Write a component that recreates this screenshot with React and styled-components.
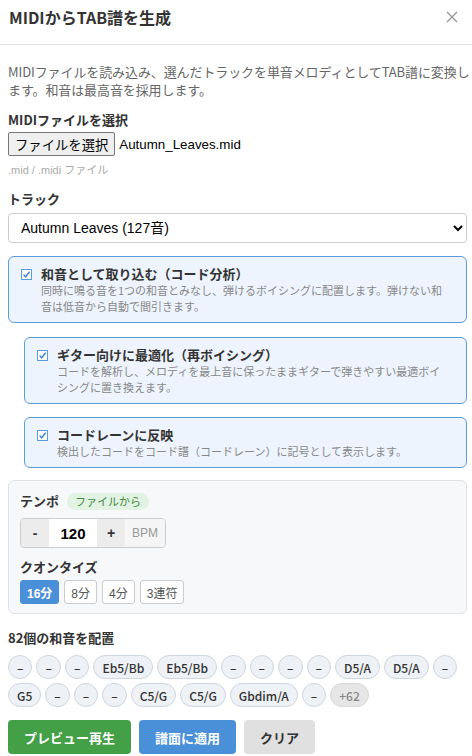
import React from "react";
import styled, { createGlobalStyle } from "styled-components";

const GlobalStyle = createGlobalStyle`
  html, body {
    margin: 0;
    padding: 0;
    background: #fff;
  }
  body {
    font-family: "Noto Sans CJK JP", "Noto Sans", sans-serif;
    color: #333;
  }
`;

const NATIVE_FONT = `"Liberation Sans", "Noto Sans CJK JP", sans-serif`;

const Modal = styled.div`
  width: 472px;
  background: #fff;
`;

const Header = styled.div`
  display: flex;
  align-items: center;
  justify-content: space-between;
  padding: 4px 12px 14px 9px;
  border-bottom: 1px solid #e0e0e0;
`;

const Title = styled.h2`
  margin: 0;
  font-size: 16px;
  line-height: 26px;
  font-weight: 700;
  color: #333;
`;

const CloseButton = styled.button`
  border: none;
  background: none;
  padding: 0;
  width: 16px;
  height: 16px;
  display: flex;
  align-items: center;
  justify-content: center;
  cursor: pointer;
`;

const Body = styled.div`
  padding: 18px 5px 0 8px;
`;

const Description = styled.p`
  margin: 0 -5px 12px 0;
  font-size: 13px;
  line-height: 18px;
  letter-spacing: -0.1px;
  color: #666;
`;

const Label = styled.div`
  font-size: 13px;
  font-weight: 700;
  line-height: 18px;
  color: #333;
  margin-bottom: ${props => (props.mb !== undefined ? props.mb : 4)}px;
`;

const FileRow = styled.div`
  display: flex;
  align-items: center;
  gap: 4px;
  height: 24px;
`;

const FileButton = styled.button`
  font-family: ${NATIVE_FONT};
  font-size: 13.33px;
  height: 24px;
  padding: 0 6px;
  background: #efefef;
  border: 1px solid #767676;
  border-radius: 2px;
  color: #000;
`;

const FileName = styled.span`
  font-family: ${NATIVE_FONT};
  font-size: 13.33px;
  color: #000;
`;

const Hint = styled.div`
  font-family: ${NATIVE_FONT};
  font-size: 11px;
  line-height: 14px;
  color: #aaa;
  margin: 7px 0 13px;
`;

const Select = styled.select`
  display: block;
  width: 100%;
  height: 30px;
  padding: 0 8px;
  font-family: ${NATIVE_FONT};
  font-size: 14px;
  color: #000;
  background: #fff;
  border: 1px solid #ccc;
  border-radius: 4px;
  margin: 0 0 13px;
`;

const OptionCard = styled.label`
  display: flex;
  align-items: flex-start;
  gap: 9px;
  margin: 0 0 ${props => props.mb || 14}px ${props => (props.indent ? 16 : 0)}px;
  padding: 8px 16px 8px 12px;
  background: #edf4fd;
  border: 1px solid #5d9be0;
  border-radius: 6px;
`;

const CheckMark = styled.span`
  flex: none;
  display: flex;
  margin-top: 4px;
`;

const OptionText = styled.div`
  display: flex;
  flex-direction: column;
`;

const OptionTitle = styled.div`
  font-size: 13px;
  font-weight: 700;
  line-height: 17px;
  color: #333;
`;

const OptionDesc = styled.div`
  font-size: 11px;
  line-height: 16px;
  color: #888;
`;

const Panel = styled.div`
  background: #f7f8fa;
  border: 1px solid #dfe2e6;
  border-radius: 6px;
  padding: 11px 11px 9px;
  margin: 0 0 15px;
`;

const LabelRow = styled.div`
  display: flex;
  align-items: center;
  gap: 8px;
  margin-bottom: 8px;
`;

const Badge = styled.span`
  font-size: 11px;
  line-height: 17px;
  padding: 0 8px;
  border-radius: 9px;
  background: #e3f3e3;
  color: #3d8b3d;
`;

const Stepper = styled.div`
  display: flex;
  width: max-content;
  height: 30px;
  box-sizing: border-box;
  border: 1px solid #ccc;
  border-radius: 4px;
  overflow: hidden;
  margin-bottom: 10px;
  font-family: ${NATIVE_FONT};
`;

const StepButton = styled.button`
  width: 28px;
  border: none;
  background: #ececec;
  font-family: ${NATIVE_FONT};
  font-size: 14px;
  font-weight: 700;
  color: #333;
  padding: 0;
`;

const TempoValue = styled.input`
  width: 48px;
  border: none;
  background: #fff;
  text-align: center;
  font-family: ${NATIVE_FONT};
  font-size: 15px;
  font-weight: 700;
  color: #000;
  padding: 0;
  outline: none;
`;

const Unit = styled.span`
  display: flex;
  align-items: center;
  padding: 0 7px;
  background: #f5f5f5;
  font-size: 12px;
  color: #999;
`;

const QuantizeRow = styled.div`
  display: flex;
  gap: 5px;
`;

const QButton = styled.button`
  height: 24px;
  padding: 0 6px;
  font-family: ${NATIVE_FONT};
  font-size: 12px;
  font-weight: ${props => (props.active ? 700 : 400)};
  color: ${props => (props.active ? "#fff" : "#555")};
  background: ${props => (props.active ? "#4a90d9" : "#fff")};
  border: 1px solid ${props => (props.active ? "#4a90d9" : "#ccc")};
  border-radius: 3px;
`;

const ChipList = styled.div`
  display: flex;
  flex-wrap: wrap;
  gap: 4px 4px;
  margin: 8px 0 13px;
`;

const Chip = styled.span`
  height: 22px;
  display: inline-flex;
  align-items: center;
  padding: 0 8px;
  font-size: 12px;
  font-weight: 500;
  color: ${props => (props.more ? "#888" : "#333")};
  background: ${props => (props.more ? "#e6e6e6" : "#eef1f6")};
  border: 1px solid ${props => (props.more ? "#d8d8d8" : "#cfd6e0")};
  border-radius: 12px;
`;

const Actions = styled.div`
  display: flex;
  gap: 8px;
`;

const ActionButton = styled.button`
  height: 34px;
  padding: 0 ${props => props.pad || 16}px;
  border: none;
  border-radius: 4px;
  font-family: "Noto Sans CJK JP", "Noto Sans", sans-serif;
  font-size: 13px;
  font-weight: 700;
  color: ${props => props.fg || "#fff"};
  background: ${props => props.bg};
`;

const Check = () => (
  <CheckMark>
    <svg width="11" height="11" viewBox="0 0 11 11">
      <rect x="0.5" y="0.5" width="10" height="10" fill="#fff" stroke="#5d9be0" strokeWidth="1" />
      <path d="M2.6 5.6 L4.6 7.8 L8.6 2.8" fill="none" stroke="#3b82d6" strokeWidth="1.4" />
    </svg>
  </CheckMark>
);

const options = [
  {
    title: "和音として取り込む（コード分析）",
    desc: "同時に鳴る音を1つの和音とみなし、弾けるボイシングに配置します。弾けない和音は低音から自動で間引きます。",
    indent: false,
    mb: 14,
  },
  {
    title: "ギター向けに最適化（再ボイシング）",
    desc: "コードを解析し、メロディを最上音に保ったままギターで弾きやすい最適ボイシングに置き換えます。",
    indent: true,
    mb: 13,
  },
  {
    title: "コードレーンに反映",
    desc: "検出したコードをコード譜（コードレーン）に記号として表示します。",
    indent: true,
    mb: 12,
  },
];

const chords = [
  "–", "–", "–", "Eb5/Bb", "Eb5/Bb", "–", "–", "–", "–", "D5/A", "D5/A", "–",
  "G5", "–", "–", "–", "C5/G", "C5/G", "Gbdim/A", "–",
];

const quantize = ["16分", "8分", "4分", "3連符"];

export default function App() {
  return (
    <>
      <GlobalStyle />
      <Modal>
        <Header>
          <Title>MIDIからTAB譜を生成</Title>
          <CloseButton aria-label="close">
            <svg width="12" height="12" viewBox="0 0 12 12">
              <path d="M1 1 L11 11 M11 1 L1 11" stroke="#999" strokeWidth="1.4" />
            </svg>
          </CloseButton>
        </Header>
        <Body>
          <Description>
            MIDIファイルを読み込み、選んだトラックを単音メロディとしてTAB譜に変換します。和音は最高音を採用します。
          </Description>

          <Label mb={3}>MIDIファイルを選択</Label>
          <FileRow>
            <FileButton type="button">ファイルを選択</FileButton>
            <FileName>Autumn_Leaves.mid</FileName>
          </FileRow>
          <Hint>.mid / .midi ファイル</Hint>

          <Label mb={5}>トラック</Label>
          <Select defaultValue="0">
            <option value="0">Autumn Leaves (127音)</option>
          </Select>

          {options.map(opt => (
            <OptionCard key={opt.title} indent={opt.indent} mb={opt.mb}>
              <Check />
              <OptionText>
                <OptionTitle>{opt.title}</OptionTitle>
                <OptionDesc>{opt.desc}</OptionDesc>
              </OptionText>
            </OptionCard>
          ))}

          <Panel>
            <LabelRow>
              <Label mb={0}>テンポ</Label>
              <Badge>ファイルから</Badge>
            </LabelRow>
            <Stepper>
              <StepButton type="button">-</StepButton>
              <TempoValue defaultValue="120" />
              <StepButton type="button">+</StepButton>
              <Unit>BPM</Unit>
            </Stepper>
            <Label mb={4}>クオンタイズ</Label>
            <QuantizeRow>
              {quantize.map((q, i) => (
                <QButton key={q} active={i === 0} type="button">
                  {q}
                </QButton>
              ))}
            </QuantizeRow>
          </Panel>

          <Label mb={0}>82個の和音を配置</Label>
          <ChipList>
            {chords.map((c, i) => (
              <Chip key={i}>{c}</Chip>
            ))}
            <Chip more>+62</Chip>
          </ChipList>

          <Actions>
            <ActionButton bg="#43a047">プレビュー再生</ActionButton>
            <ActionButton bg="#4a90d9">譜面に適用</ActionButton>
            <ActionButton bg="#e0e0e0" fg="#333">クリア</ActionButton>
          </Actions>
        </Body>
      </Modal>
    </>
  );
}
